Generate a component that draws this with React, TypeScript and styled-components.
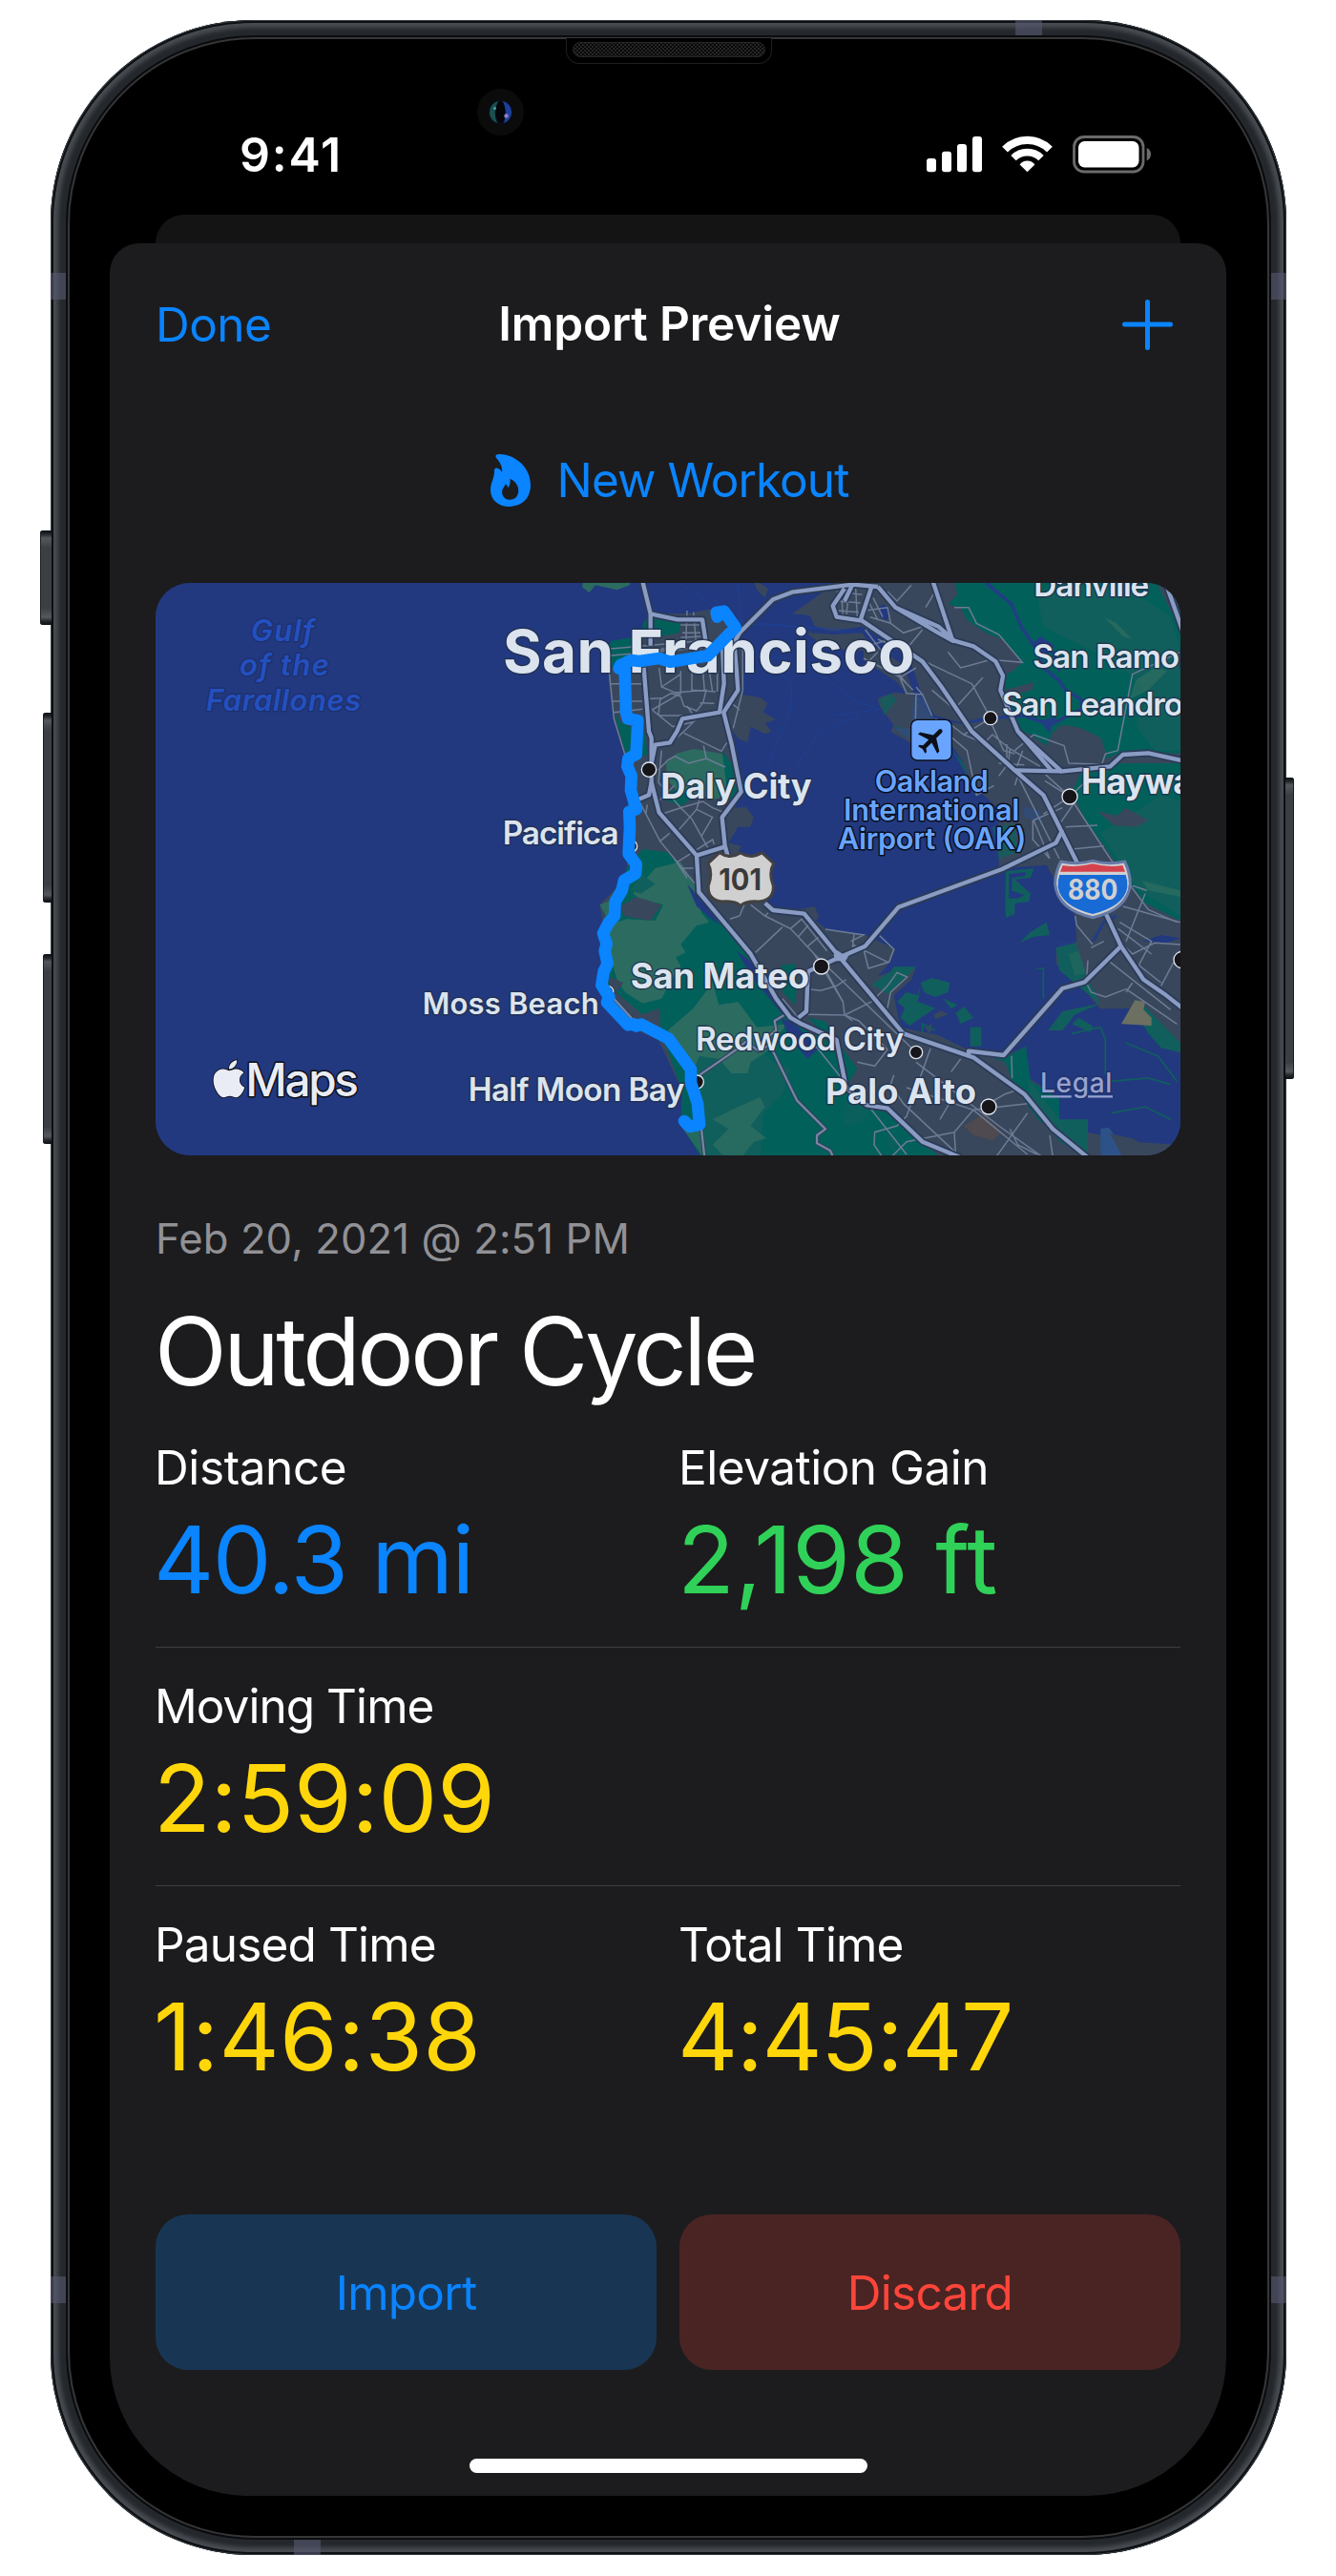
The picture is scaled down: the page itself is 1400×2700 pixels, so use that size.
import React from "react";
import styled, { createGlobalStyle } from "styled-components";
import { FaApple } from "react-icons/fa";

const GlobalStyle = createGlobalStyle`
  body { margin: 0; background: #fff; font-family: "Inter", "Liberation Sans", sans-serif; }
  *, *::before, *::after { box-sizing: border-box; }
`;

/* ---------- device ---------- */

const Page = styled.div`
  width: 1400px;
  height: 2700px;
  padding: 21px 52px 0 53px;
  background: #fff;
  overflow: hidden;
`;

const Device = styled.div`
  position: relative;
  width: 1295px;
  height: 2657px;
  padding: 18px;
  border-radius: 212px;
  background: #24282d;
  box-shadow: inset 0 0 0 1px #3a3f44, inset 0 0 0 3px #0c1014, inset 0 0 4px 8px #484c51;
`;

const Bezel = styled.div`
  position: relative;
  z-index: 1;
  display: flex;
  flex-direction: column;
  height: 100%;
  padding: 2px 43px 42px 42px;
  border-radius: 196px;
  background: #000;
  border: 2px solid #363636;
  box-shadow: 0 0 0 2px #0a0c0f;
`;

const SideKey = styled.i<{ $top: number; $height: number; $side: "left" | "right"; $depth: number }>`
  position: absolute;
  top: ${(p) => p.$top}px;
  ${(p) => p.$side}: ${(p) => -p.$depth}px;
  width: ${(p) => p.$depth + 1}px;
  height: ${(p) => p.$height}px;
  border-radius: ${(p) => (p.$side === "left" ? "3px 0 0 3px" : "0 3px 3px 0")};
  background: linear-gradient(#0b0f12, #24282c 4px, #55595d 8px, #3b3f43 18px, #3b3f43 calc(100% - 18px), #55595d calc(100% - 8px), #24282c calc(100% - 4px), #0b0f12);
  box-shadow: inset ${(p) => (p.$side === "left" ? "1px" : "-1px")} 0 0 #1b1f22;
`;

const Antenna = styled.i<{ $x: number; $y: number; $w: number; $h: number }>`
  position: absolute;
  left: ${(p) => p.$x}px;
  top: ${(p) => p.$y}px;
  width: ${(p) => p.$w}px;
  height: ${(p) => p.$h}px;
  background: rgba(86, 88, 112, 0.6);
`;

const Earpiece = styled.div`
  position: absolute;
  top: -1px;
  left: 50%;
  width: 216px;
  height: 27px;
  margin-left: -108px;
  padding: 4px 6px 6px;
  background: #000;
  border: 1.5px solid #1f1f1f;
  border-top: 0;
  border-radius: 0 0 14px 14px;
`;

const Grille = styled.div`
  height: 16px;
  border-radius: 8px;
  border: 1.5px solid #262626;
  background-color: #080808;
  background-image: radial-gradient(#2c2c2c 24%, transparent 30%), radial-gradient(#2c2c2c 24%, transparent 30%);
  background-size: 4px 4px;
  background-position: 0 0, 2px 2px;
`;

const Camera = styled.div`
  position: absolute;
  left: 427px;
  top: 52px;
  width: 49px;
  height: 49px;
  display: grid;
  place-items: center;
  border-radius: 50%;
  background: #0b0b0b;
`;

const StatusBar = styled.header`
  display: flex;
  justify-content: space-between;
  align-items: center;
  height: 182px;
  padding: 56px 78px 0 136px;
  color: #fff;
`;

const Clock = styled.time`
  font-size: 50px;
  line-height: 60px;
  font-weight: 600;
  letter-spacing: 1.8px;
`;

const BackSheet = styled.div`
  flex: none;
  height: 60px;
  margin: 0 48px -30px;
  border-radius: 30px 30px 0 0;
  background: #141414;
`;

const Sheet = styled.main`
  position: relative;
  display: flex;
  flex-direction: column;
  flex: 1;
  padding: 0 48px 24px;
  border-radius: 31px 31px 146px 146px;
  background: #1c1c1e;
`;

/* ---------- sheet content ---------- */

const NavBar = styled.nav`
  display: grid;
  grid-template-columns: 1fr auto 1fr;
  align-items: center;
  height: 170px;
  font-size: 49.5px;
  line-height: 60px;
  color: #0a84ff;
`;

const DoneLink = styled.span`
  letter-spacing: -0.55px;
`;

const NavTitle = styled.h1`
  margin: 0 0 2px 3px;
  font-size: inherit;
  font-weight: 600;
  letter-spacing: -0.17px;
  color: #fff;
`;

const AddButton = styled.span`
  display: flex;
  justify-content: flex-end;
  padding-right: 8px;
`;

const NewWorkout = styled.div`
  display: flex;
  align-items: center;
  justify-content: center;
  gap: 28px;
  height: 156px;
  margin: 0 0 30px 3px;
  font-size: 49.5px;
  letter-spacing: -0.95px;
  color: #0a84ff;
`;

const MapCard = styled.div`
  height: 600px;
  border-radius: 36px;
  overflow: hidden;
  background: #22397f;

  > svg {
    display: block;
  }
`;

const Timestamp = styled.p`
  margin: 63px 0 0;
  font-size: 43.6px;
  line-height: 49px;
  letter-spacing: 0.13px;
  color: #919196;
`;

const WorkoutTitle = styled.h2`
  margin: 33px 0 0 -1px;
  font-size: 99px;
  line-height: 121px;
  font-weight: 400;
  letter-spacing: -3.5px;
  color: #fff;
`;

const StatRow = styled.section`
  display: grid;
  grid-template-columns: 1fr 1fr;
  column-gap: 24px;
  height: 250px;
  padding-top: 31px;

  &:not(:last-of-type) {
    border-bottom: 1px solid #3d3d40;
  }
`;

const Stat = styled.div`
  display: flex;
  flex-direction: column;
  gap: 17px;
`;

const StatLabel = styled.span<{ $tracking: number }>`
  font-size: 49.5px;
  line-height: 60px;
  letter-spacing: ${(p) => p.$tracking}px;
  margin-left: -1px;
  color: #fff;
`;

const StatValue = styled.span<{ $tracking: number; $color: string }>`
  font-size: 98px;
  line-height: 100px;
  letter-spacing: ${(p) => p.$tracking}px;
  margin-left: -2px;
  color: ${(p) => p.$color};
`;

const Actions = styled.div`
  display: grid;
  grid-template-columns: 1fr 1fr;
  gap: 24px;
  margin-top: auto;
`;

const ActionButton = styled.button<{ $fg: string; $bg: string }>`
  height: 163px;
  padding: 0;
  border: 0;
  border-radius: 34px;
  font: 400 49.5px "Inter", sans-serif;
  letter-spacing: -0.75px;
  color: ${(p) => p.$fg};
  background: ${(p) => p.$bg};
`;

const HomeIndicator = styled.div`
  width: 417px;
  height: 15px;
  margin: 93px auto 0;
  border-radius: 8px;
  background: #fff;
`;

/* ---------- icons ---------- */

const StatusIcons = () => (
  <svg width="236" height="40" viewBox="971 142 236 40">
    <g fill="#fff">
      <rect x="971" y="166" width="10" height="14.3" rx="3" />
      <rect x="987" y="158.7" width="10" height="21.6" rx="3" />
      <rect x="1003" y="151" width="10" height="29.3" rx="3" />
      <rect x="1019" y="143" width="10" height="37.3" rx="3" />
      <path d="M1076.5 180.3L1068.6 172.4Q1071.5 168.6 1076.5 168.6Q1081.5 168.6 1084.4 172.4Z" />
    </g>
    <g fill="none" stroke="#fff" strokeWidth="8.2">
      <path d="M1053 156.6A33.2 33.2 0 0 1 1100 156.6" />
      <path d="M1062 165.6A20.5 20.5 0 0 1 1091 165.6" strokeWidth="7.6" />
    </g>
    <rect x="1125.5" y="143.5" width="72.5" height="36.5" rx="10.5" fill="none" stroke="#6b6b6b" strokeWidth="2.8" />
    <rect x="1130" y="148" width="63.5" height="27.5" rx="6.5" fill="#fff" />
    <path d="M1201.7 155V168.5Q1206 166.5 1206 161.8T1201.7 155Z" fill="#6b6b6b" />
  </svg>
);

const CameraLens = () => (
  <svg width="27" height="27" viewBox="0 0 27 27">
    <circle cx="13.5" cy="13.5" r="12.5" fill="#0b0f1c" />
    <path d="M11 2A12 12 0 0 0 10 25Q5 14 11 2Z" fill="#1a4f50" />
    <path d="M16 2A12 12 0 0 1 17 25Q21 14 16 2Z" fill="#1d3f9c" />
    <ellipse cx="13.500" cy="13.500" rx="5" ry="11" fill="#040509" />
    <circle cx="7.500" cy="9.500" r="1.500" fill="#4fa0a8" />
    <circle cx="19.500" cy="17.500" r="2.200" fill="#8f7fc4" />
  </svg>
);

const PlusIcon = () => (
  <svg width="53" height="53" viewBox="0 0 53 53" stroke="#0a84ff" strokeWidth="5" strokeLinecap="round">
    <path d="M2.500 26H50.500M26.500 2.500V50.500" />
  </svg>
);

const FlameIcon = () => (
  <svg width="42" height="55" viewBox="69 101 125 163">
    <path
      fill="#0a84ff"
      fillRule="evenodd"
      d="M86 111C83 105 87 101 98 101C150 103 194 145 194 197C194 238 168 264 128 264C92 264 69 242 69 212C69 190 81 178 81 151C81 143 88 142 93 145C98 147 102 151 105 157C107 138 97 124 86 111ZM130 177C145 183 156 197 156 214C156 232 146 243 130 243C115 243 105 233 105 219C105 208 112 204 116 194C120 197 123 201 123 206C130 198 131 188 130 177Z"
    />
  </svg>
);

/* ---------- map ---------- */

const LAND = "#39475c";
const FOREST = "#02605b";
const MEADOW = "#2c6c60";
const PARK = "#115f5d";
const WATER = "#22397f";

const Label = styled.text<{ $size: number; $weight?: number; $fill?: string; $halo?: string }>`
  font-family: "Inter", sans-serif;
  font-size: ${(p) => p.$size}px;
  font-weight: ${(p) => p.$weight ?? 600};
  fill: ${(p) => p.$fill ?? "#dbe4ee"};
  stroke: ${(p) => p.$halo ?? "rgba(34, 47, 78, 0.8)"};
  stroke-width: 9px;
  stroke-linejoin: round;
  paint-order: stroke;
`;

type MapLabel = {
  t: string; x: number; y: number; w?: number; s: number;
  weight?: number; fill?: string; halo?: string; italic?: boolean; ls?: number;
};

const BLUE = { fill: "#68a4ff", halo: "#0b0f1c" };
const GULF = { fill: "#2450bf", halo: "#1e316f", italic: true };

const labels: MapLabel[] = [
  { t: "Daly City", x: 577, y: 710, w: 475, s: 109, weight: 700 },
  { t: "Pacifica", x: 80, y: 855, w: 366, s: 100 },
  { t: "Danville", x: 1750, y: 75, w: 363, s: 100 },
  { t: "San Ramon", x: 1747, y: 300, s: 100, ls: -3 },
  { t: "San Leandro", x: 1649, y: 450, s: 100, ls: -3.4 },
  { t: "Hayward", x: 1899, y: 697, s: 109, weight: 700, ls: -3 },
  { t: "San Mateo", x: 482, y: 1308, w: 562, s: 109, weight: 700 },
  { t: "Redwood City", x: 687, y: 1503, w: 654, s: 100 },
  { t: "Palo Alto", x: 1095, y: 1672, w: 474, s: 109, weight: 700 },
  { t: "Half Moon Bay", x: -28, y: 1662, w: 680, s: 100 },
  { t: "Moss Beach", x: -172, y: 1388, w: 555, s: 93 },
  { t: "Gulf", x: -712, y: 215, w: 200, s: 93, ...GULF },
  { t: "of the", x: -747, y: 324, w: 282, s: 93, ...GULF },
  { t: "Farallones", x: -852, y: 436, w: 487, s: 93, ...GULF },
  { t: "Oakland", x: 1250, y: 690, w: 358, s: 92, ...BLUE },
  { t: "International", x: 1152, y: 780, w: 553, s: 92, ...BLUE },
  { t: "Airport (OAK)", x: 1134, y: 870, w: 592, s: 92, ...BLUE },
];

const highways = [
  "M518 20L545 130L545 230M524 300L540 500L548 520V660L572 755L690 890L697 1005L860 1200L940 1340L985 1400L1020 1420L1130 1470L1150 1570L1160 1620L1225 1675L1290 1685L1400 1790L1520 1840",
  "M545 130L630 148H708L722 240M770 200L776 350L762 440L645 460L628 500L606 535L560 542L548 600M548 660L540 700L508 713",
  "M808 220L825 190L930 85L990 62L1180 38L1260 45M808 220L815 300L820 370L775 440L800 540L830 690L770 770L780 870M690 890L780 862L790 900",
  "M905 1040L930 1062L1028 1073L1140 1210L1340 1450L1560 1525L1720 1640L1810 1750L1920 1840",
  "M1040 1255L1140 1210L1220 1175L1325 1052L1650 933L1820 850L1840 810M1040 1255L1035 1380L1010 1400",
  "M1545 1525V1505L1655 1518L1840 1308L1910 1288L2024 1175",
  "M1155 50L1118 105L1130 140L1210 152L1400 280L1460 360L1555 500L1690 622L1780 700L1840 820L1890 920L1980 1080L2024 1175L2095 1280L2160 1325L2220 1372",
  "M1180 38L1155 90M1240 45L1205 150M1260 45L1315 110L1450 170L1500 215L1560 232L1630 280L1653 325L1645 370L1700 500L1840 628M1315 110L1450 190L1495 215L1430 20M1700 500L1805 622",
  "M1690 622L1840 625L1990 610L2030 573L2110 568L2220 592M2160 20L2220 190",
];

const streets = [
  "M415 310L430 460L470 590M420 240L700 215M415 262L780 230M420 350H520M425 405H520M430 440L520 430M500 250L640 235M520 398L580 395",
  "M660 120L655 240M680 125L690 240M640 165H710M645 190H705M640 205L720 200M572 300L580 360L640 385M550 432L640 380L640 310M675 300V370L750 375M710 310L715 375M730 310L740 375M755 310V375M580 360L640 320",
  "M550 432L615 485M570 450H680L660 420M570 450L575 400L610 380L640 390L650 420L690 435L710 410L720 370L620 378M615 485L680 470L650 500L610 535M650 505L768 562L785 535M835 240V370L805 490M700 410L745 412M805 415L825 432",
  "M570 620L600 590L622 578L665 600L720 585L780 612M712 545L720 585M580 560L570 660L640 740L710 720L740 740L790 760L825 700M570 720L620 670M580 760L640 740L675 775L725 865M625 820L690 745L740 770L705 830M690 745L700 710",
  "M510 720L575 845L690 985M575 845L605 820M630 910L740 840L745 855M535 730L530 760M620 900L660 960M640 930H690",
  "M795 1090L825 1080L840 1045M860 1045L905 1080L985 1120L1060 1200L1150 1350L1155 1390M905 1080L915 1070M985 1120L1020 1090L1100 1190M1010 1145L1045 1105M1040 1175L1075 1145M875 1195L960 1115M1040 1390L1155 1392L1180 1410M1060 1200L1380 1509M1040 1310L1080 1315L1130 1300L1160 1280",
  "M1095 1122L1215 1140L1175 1160M1185 1138L1180 1180M1215 1185L1230 1245L1295 1225L1310 1185L1265 1142M1180 1170L1290 1225M1155 1392L1240 1350L1290 1300L1320 1258L1352 1272L1300 1320L1290 1370M1150 1350L1090 1240M1155 1392L1200 1410L1290 1500M1195 1540L1250 1552L1290 1500M960 1340L1060 1460M1065 1490L1170 1620L1240 1690L1350 1830",
  "M1310 1580L1300 1610L1340 1670L1500 1820M1425 1497L1350 1710L1320 1740L1250 1760L1248 1800L1275 1840M1350 1620L1560 1690L1730 1830M1380 1540L1640 1740L1780 1840M1500 1760L1560 1690L1730 1670M1500 1760L1350 1790L1300 1840M1500 1760L1505 1840M1490 1570L1520 1530M1455 1720L1490 1660M1630 1840L1730 1700M1675 1750L1700 1800L1760 1830M1800 1770L1810 1840M1680 1520L1682 1590M1590 1680L1660 1640L1690 1630",
  "M1130 60L1210 70M1125 90L1205 95M1135 120L1200 125M1170 50L1160 140M1190 50L1195 140M1145 55L1150 140M1230 90L1260 150M1245 80L1275 140M1220 120L1290 110M1235 140L1300 160M1290 60L1320 90L1365 40M1290 110L1300 160L1340 190L1400 170",
  "M1220 180L1350 350M1230 230L1300 210M1260 250L1210 300M1215 270L1330 330L1380 300M1300 300L1370 370M1320 310L1350 380L1400 384L1430 450M1260 210L1555 350L1614 458M1430 370L1500 430L1590 330M1350 240L1400 180M1410 110L1440 60M1480 250L1520 300L1630 270M1500 110H1545L1570 160L1640 195L1714 283L1630 275",
  "M1400 384L1380 360M1380 384L1378 460M1440 460L1490 480L1530 510L1614 458M1470 500L1540 560L1570 700L1625 670M1530 510L1575 530M1610 460L1655 560L1690 570M1555 520L1600 530L1620 510L1675 555L1770 610M1640 600L1720 605M1675 555L1670 600L1640 640M1690 560L1750 510L1845 545L1860 600L1960 603M1665 540V600M1715 560L1690 630",
  "M1700 640L1830 900M1700 640L1690 670M1750 780L1800 900M1780 760L1863 705L1770 620M1747 780V840L1800 900M1747 780L1840 740M1785 655L1863 705M1863 705L1920 650L1910 640M1863 705L1990 900L2110 1060L2200 1100M1850 800L1950 795M1870 870L1970 860M1825 800L1880 720",
  "M1964 603L1975 570L2014 560L2060 320L2211 250M1880 1080L1885 1110L1935 1170M1930 1180L1970 1160M1920 1220L1915 1290L1930 1320L1975 1335L2040 1310M2030 1050L2211 1100M1990 1225L2180 1375M2030 1170L2060 1200L2130 1165L2211 1170M2020 1100L2120 1160L2080 1235M2100 1010L2040 1160M2060 985L2105 1000M2015 1120L2120 1200M2040 1310L2200 1420M2190 1225L2150 1300M2080 1235L2150 1290M2120 1160L2070 1130M2060 1290L2040 1320",
];

const coastRoad =
  "M430 1340L520 1440M700 1580L815 1500L845 1475L885 1505L920 1485L1005 1660L1095 1750L1068 1770V1795L1110 1818L1120 1840M705 1750L715 1840M890 1480L940 1440L935 1410L965 1392";

const ROUTE =
  "M755 140L752 126L776 122L812 173L725 262L607 281L573 270L510 279L484 276L450 292L446 302L464 300L468 440L474 460L505 466L500 572L475 585L472 610L485 640L483 685L500 745L478 752L480 800L476 885L500 918L498 947L462 968L455 1000L434 1035L432 1080L414 1100L396 1135L407 1168L401 1190L410 1230L398 1255L391 1298L415 1335L408 1352L475 1423L492 1420L500 1426L516 1421L602 1466L672 1562V1605L693 1670L699 1736L668 1742L651 1725";

const dots: [number, number, number][] = [
  [540, 620, 23], [485, 861, 18], [1082, 1239, 24], [411, 1318, 17], [691, 1602, 21],
  [1614, 458, 21], [1863, 705, 24], [1380, 1509, 20], [1608, 1680, 24], [2216, 1218, 26],
];

const MapView = () => (
  <svg width="1074" height="600" viewBox="-1011 33 3222 1800" preserveAspectRatio="none">
    <rect x="-1011" y="33" width="3222" height="1800" fill={WATER} />
    {/* Marin headlands */}
    <path fill={MEADOW} d="M330 45L352 64L372 40L440 55L480 40V20H335Z" />
    <path fill={LAND} d="M865 20L915 50L905 80L880 55Z" />
    {/* peninsula */}
    <path
      fill={LAND}
      d="M522 160L545 128L660 130L740 115L800 160L835 240V385L862 388L895 395L912 412L900 440L938 462L905 475L925 500L905 508L860 485L850 535L820 522L805 500L830 690L812 740L845 738L870 770L858 800L820 800L790 850L830 860L815 900L905 1035L935 1062L1020 1058L1060 1050L1075 1080L1065 1095L1100 1125L1215 1138L1315 1185L1298 1225L1260 1270L1330 1245L1378 1245L1365 1280L1310 1330L1330 1430L1450 1455L1540 1500L1660 1520L1725 1490L1735 1590L1825 1650L1825 1722H1920V1760L2060 1790L2211 1800V1840H705L640 1735L645 1630L570 1470L480 1430L400 1340L380 1290L410 1180L385 1045L470 960L475 600L430 460L413 345L418 240L520 205Z"
    />
    <path fill={FOREST} d="M420 215L485 205L480 270L425 300L412 240ZM520 165L545 130L600 145L640 160L635 190L560 205L545 175L520 200ZM430 440L450 470L530 510L535 575L470 580Z" />
    <path fill={MEADOW} d="M595 600L625 570L680 555L770 570L785 620L800 660L790 700L740 715L700 700L640 700L595 650Z" />
    <path fill={FOREST} d="M770 560L800 600L815 670L840 700L790 715L780 640ZM590 680L690 700L640 735L590 715Z" />
    {/* coastal range */}
    <path
      fill={FOREST}
      d="M470 930L520 870L600 880L660 960L730 1030L860 1200L885 1260L985 1400L1110 1480L1060 1420L1130 1470L1195 1560L1160 1620L1180 1660L1290 1700L1400 1795L1460 1840H705L640 1735L645 1630L590 1480L570 1400L520 1390L400 1290L410 1100Z"
    />
    <path
      fill={MEADOW}
      d="M385 1045L425 1030L440 1100L470 1090L560 1095L585 1045L510 1025L490 1010L560 930L640 910L680 975L705 1070L730 1100L690 1110L640 1170L655 1195L625 1210L640 1240L600 1300L580 1340L520 1355L465 1320L440 1280L415 1200L395 1150L405 1080Z"
    />
    <path fill={PARK} d="M480 1000L520 950L560 980L515 1010ZM620 1410L690 1450L820 1440L930 1540L985 1560L960 1640L900 1700L890 1840H715L690 1650L640 1500Z" />
    <path fill={MEADOW} d="M600 1440L680 1370L740 1290L760 1360L820 1350L880 1430L975 1420L935 1470L920 1500L860 1540L850 1575L800 1575L760 1530L700 1520L680 1560Z" />
    <path fill={MEADOW} d="M740 1720L800 1690L890 1650L905 1680L860 1740L910 1780L870 1790L830 1840H780L740 1800L790 1750ZM640 1740L700 1740L712 1840Z" opacity=".85" />
    <path fill={LAND} d="M450 1050L500 1020L580 1045L545 1095L460 1080ZM412 1270L460 1290L440 1320L415 1300ZM520 1390L575 1370V1430L540 1430Z" />
    <path fill={WATER} d="M660 980L740 1065L760 1110L690 1050ZM815 1190L870 1230L985 1380L960 1390L870 1280ZM955 1400L1000 1420L1070 1500L1040 1530L985 1470Z" />
    <path fill={FOREST} d="M955 1235L1000 1230L1005 1300L1000 1360L960 1320ZM1040 1400L1090 1410L1130 1450L1100 1460ZM1560 1505L1670 1520L1725 1490L1740 1600L1830 1655V1720L1770 1730L1690 1620L1660 1540Z" />
    <path fill={PARK} d="M1310 1240L1380 1240L1350 1270L1290 1325L1240 1295L1300 1255ZM1730 1590L1830 1720H1920V1840L1830 1790L1740 1660Z" />
    <path fill="#4e4a4f" d="M1530 1740L1590 1705L1650 1760L1620 1785L1560 1770Z" />
    <path fill={PARK} d="M1160 1640L1230 1690L1210 1730L1150 1740ZM1290 1770L1330 1780L1310 1820L1290 1800Z" opacity=".6" />
    {/* marsh islands */}
    <path
      fill={PARK}
      d="M1395 1290L1430 1275L1486 1290L1480 1320L1440 1335L1405 1320ZM1320 1350L1350 1320L1385 1330L1395 1290L1385 1350L1440 1370L1395 1400L1360 1425L1330 1400L1345 1370ZM1505 1385L1530 1365L1560 1400L1520 1420ZM1550 1430L1585 1430V1490H1550ZM1465 1340L1510 1360L1490 1372Z"
    />
    <path fill={LAND} d="M1435 1390L1460 1378L1480 1390L1440 1405ZM1405 1430L1430 1420L1425 1450Z" />
    {/* east bay */}
    <path
      fill={LAND}
      d="M1110 45L1040 95L990 130L1045 135L1060 165L1040 195L1100 240L1215 245L1215 275L1320 345L1350 380L1310 378L1260 395L1265 420L1310 480L1300 500L1370 540L1490 540L1530 600L1550 660L1640 745V930L1790 920L1880 1080L1885 1170L1820 1180V1230L1900 1300L1960 1375L2060 1370L2211 1520V20H1130Z"
    />
    <path fill={WATER} d="M1050 165L1115 185L1210 170L1330 240L1370 300L1400 390L1440 450L1550 480L1440 465L1380 400L1340 290L1230 220L1210 190L1120 195L1050 190Z" />
    <path fill={WATER} d="M1260 110L1280 100L1298 118L1290 150L1268 142Z" />
    <path fill={PARK} d="M1265 400L1300 380L1320 400L1280 450ZM1310 480L1360 500L1370 530ZM1495 560L1530 600L1550 660L1540 640ZM1620 800L1690 790L1700 880L1640 900Z" opacity=".8" />
    <path fill="#2f4c7c" d="M1375 390L1400 390L1440 462H1364ZM1310 490L1364 490V530ZM1715 735L1770 750L1775 785L1720 770Z" opacity=".8" />
    <path fill={FOREST} d="M1500 20L1510 70L1480 100L1520 110L1540 150L1600 190L1650 210L1714 283L1690 305L1650 330L1660 370L1750 345L1745 370L1690 385L1670 440L1690 490L1740 510L1790 545L1810 500L1850 480L1900 490L1960 520L1980 575L1960 590L2020 570L2130 565L2211 570V20Z" />
    <path fill={FOREST} d="M1900 625L2030 600L2211 600V1095L2100 1040L2000 900L1910 775L1870 690Z" />
    <path fill={PARK} d="M1760 70L1880 40L2060 60L2180 140L2211 240V560L2130 560L2070 480L2110 380L2010 280L1900 230L1780 170ZM2060 760L2150 700L2211 720V1080L2080 1000L1960 820Z" />
    <path fill={MEADOW} d="M1970 140L2010 160L2060 210L2030 200ZM2070 340L2130 300L2170 310L2110 370L2050 400ZM2090 970L2211 1000V1020L2110 1000Z" opacity=".75" />
    <path fill={LAND} d="M2130 20L2150 60L2211 180V20ZM1950 750L2010 765L2040 740L2110 780L2070 800L2000 795ZM1830 480L1900 500L1965 560L1960 600L1850 590L1800 530Z" />
    {/* eastern creeks */}
    <path fill="none" stroke="#233c86" strokeWidth="10" d="M1600 33L1680 100L1710 170L1750 230L1810 250L1830 310M1760 240L1780 300L1830 340L1850 370L1900 400V430L1800 480L1720 450L1600 460L1550 470M2010 1080L1970 1100L1930 1170H1830" />
    <path fill="#233c86" d="M1745 225L1770 200L1815 230L1790 260L1760 262ZM1770 465L1820 455L1798 505Z" />
    {/* southern marshes */}
    <path
      fill={PARK}
      d="M1662 940L1750 930L1740 960L1690 965L1740 1010L1735 1035L1660 1045ZM1660 1040H1690V1075L1662 1085ZM1705 1165L1740 1130L1790 1100L1800 1140L1750 1145ZM1795 1440L1840 1380L1960 1355L1880 1390L1840 1440ZM1890 1400L1960 1440L1950 1455L1870 1420ZM1820 1180L1900 1160L1940 1170L1930 1290L1960 1360L1830 1250ZM1990 1585L2090 1575L2070 1595L2000 1600ZM2050 1380L2211 1480V1500L2160 1490L2110 1440Z"
    />
    <path fill={WATER} d="M1672 948L1725 942L1722 955L1682 960L1680 1000L1720 1015L1700 1025L1672 1025Z" />
    <path fill={MEADOW} opacity=".5" d="M1860 1200L1920 1180L1910 1260L1880 1270Z" />
    <path fill={LAND} d="M1880 1160L1935 1160L2020 1175L2090 1290L2120 1350L1990 1370L1950 1330L1925 1290Z" />
    <path fill={WATER} d="M2090 1160L2150 1140L2211 1150L2170 1165ZM1960 1372L2000 1372L2060 1372L2100 1430L2130 1490L2211 1510V1780L2110 1790L1920 1760V1460Z" />
    <path fill={PARK} d="M2060 1370L2100 1365L2211 1480V1510L2150 1495L2110 1450Z" />
    <path fill="none" stroke={PARK} strokeWidth="5" d="M1870 1450L1960 1430L1975 1470L1975 1580M2040 1480L2140 1520L2200 1600M1990 1600L2110 1590L2180 1610M1760 1245H1780V1340M1995 1700L2100 1680L2180 1720M1400 1445V1420L1440 1440" />
    <path fill="#6c7060" d="M2068 1345L2100 1350L2095 1375L2120 1400V1425L2030 1420H2025Z" />
    <path fill="#2d5288" d="M1960 1750L1985 1745L2020 1790L2030 1840H1960Z" />
    <path fill={LAND} d="M1990 1765L2060 1780L2150 1830V1840H2030Z" />
    {/* ferry lines */}
    <path fill="none" stroke="#1d45a0" strokeWidth="3" opacity=".6" d="M640 35L810 150L1200 190M700 35L815 160L1180 180M820 35L830 160M815 200L990 350L985 430L900 640M850 240L1050 300L1200 410L1265 430M1200 450L1080 500L1000 610M1265 430L1120 450" />

    <g fill="none" stroke="#6d7b95" strokeWidth="4.500">
      {streets.map((d) => <path key={d} d={d} />)}
    </g>
    <g fill="none" strokeLinejoin="round">
      <path d={coastRoad} stroke="#2f4058" strokeWidth="13" />
      <path d={coastRoad} stroke="#7585a3" strokeWidth="7" />
      {highways.map((d) => <path key={d} d={d} stroke="#2b3b57" strokeWidth="24" />)}
      {highways.map((d) => <path key={d + "-fill"} d={d} stroke="#8a9cc3" strokeWidth="13" />)}
    </g>
    <path d="M1120 1203L1132 1188L1150 1200L1175 1193L1158 1222L1128 1222Z" fill="#8a9cc3" />

    {dots.map(([x, y, r]) => (
      <circle key={`${x}-${y}`} cx={x} cy={y} r={r} fill="#15151a" stroke="#e2e6ee" strokeWidth="4" />
    ))}

    <Label $size={186} $weight={700} x={81} y={314} textLength={1294}>San Francisco</Label>
    <path d={ROUTE} fill="none" stroke="#0a84ff" strokeWidth="38" strokeLinejoin="round" strokeLinecap="round" />

    {labels.map((l) => (
      <Label
        key={l.t}
        $size={l.s}
        $weight={l.weight}
        $fill={l.fill}
        $halo={l.halo}
        x={l.x}
        y={l.y}
        textLength={l.w}
        letterSpacing={l.ls}
        fontStyle={l.italic ? "italic" : undefined}
      >
        {l.t}
      </Label>
    ))}

    {/* airport */}
    <rect x="1364" y="463" width="128" height="128" rx="20" fill="#69a4ff" stroke="#0c0f18" strokeWidth="4" />
    <g transform="translate(1429 526) rotate(45) scale(4.5) translate(-11.5 -12)">
      <path fill="#0c0f18" d="M21 16v-2l-8-5V3.500c0-.83-.67-1.500-1.500-1.500S10 2.670 10 3.500V9l-8 5v2l8-2.500V19l-2 1.500V22l3.500-1 3.500 1v-1.500L13 19v-5.500l8 2.500z" />
    </g>

    {/* US 101 */}
    <path
      fill="#d0d0d0"
      stroke="#434141"
      strokeWidth="9"
      strokeLinejoin="round"
      d="M762 881Q795 903 828 882Q861 903 895 881L932 915Q915 945 931 985Q934 1030 885 1035Q845 1032 828 1048Q811 1032 771 1035Q723 1030 727 985Q742 945 726 915Z"
    />
    <Label $size={92} $weight={700} $fill="#3a3a3a" $halo="none" x={760} y={998} textLength={134} lengthAdjust="spacingAndGlyphs">101</Label>

    {/* I-880 */}
    <path
      fill="#d0d0d0"
      stroke="#667aa6"
      strokeWidth="9"
      strokeLinejoin="round"
      d="M1835 909Q1885 920 1935 907Q1985 920 2036 909Q2053 945 2053 980Q2046 1060 1935 1085Q1824 1060 1817 980Q1817 945 1835 909Z"
    />
    <path fill="#d4424e" d="M1841 921Q1885 929 1935 916Q1985 929 2029 921L2037 941H1833Z" />
    <path fill="#186bd5" d="M1831 951H2039Q2046 970 2044 990Q2034 1050 1935 1074Q1836 1050 1826 990Q1824 970 1831 951Z" />
    <Label $size={88} $weight={700} $fill="#d0d0d0" $halo="none" x={1857} y={1028} textLength={157} lengthAdjust="spacingAndGlyphs">880</Label>

    {/* Apple Maps logo */}
    <FaApple size={134} x={-847} y={1525} color="#e9ecf4" stroke="#0b0e16" strokeWidth={20} style={{ paintOrder: "stroke" }} />
    <Label $size={143} $weight={500} $fill="#e9ecf4" $halo="#0b0e16" x={-728} y={1648} textLength={356}>Maps</Label>

    <Label $size={84} $weight={500} $fill="#97a3cf" $halo="rgba(30,45,95,.6)" x={1770} y={1635} textLength={226}>Legal</Label>
    <path d="M1773 1648H1868M1920 1648H1998" stroke="#97a3cf" strokeWidth="7" />
  </svg>
);

/* ---------- data ---------- */

type StatItem = { label: string; labelTracking: number; value: string; tracking: number; color: string };

const YELLOW = "#ffd60a";

const statRows: StatItem[][] = [
  [
    { label: "Distance", labelTracking: -0.4, value: "40.3 mi", tracking: -1.6, color: "#0a84ff" },
    { label: "Elevation Gain", labelTracking: -0.5, value: "2,198 ft", tracking: 0.3, color: "#30d158" },
  ],
  [{ label: "Moving Time", labelTracking: -0.95, value: "2:59:09", tracking: -0.2, color: YELLOW }],
  [
    { label: "Paused Time", labelTracking: -0.85, value: "1:46:38", tracking: 0.2, color: YELLOW },
    { label: "Total Time", labelTracking: -0.85, value: "4:45:47", tracking: -1.5, color: YELLOW },
  ],
];

export default function App() {
  return (
    <Page>
      <GlobalStyle />
      <Device>
        <SideKey $side="left" $depth={11} $top={535} $height={99} />
        <SideKey $side="left" $depth={8} $top={726} $height={199} />
        <SideKey $side="left" $depth={8} $top={979} $height={199} />
        <SideKey $side="right" $depth={8} $top={794} $height={316} />
        <Antenna $x={0} $y={265} $w={17} $h={28} />
        <Antenna $x={1278} $y={265} $w={17} $h={28} />
        <Antenna $x={0} $y={2365} $w={17} $h={28} />
        <Antenna $x={1278} $y={2365} $w={17} $h={28} />
        <Antenna $x={1011} $y={0} $w={28} $h={17} />
        <Antenna $x={255} $y={2640} $w={28} $h={17} />
        <Bezel>
          <Earpiece>
            <Grille />
          </Earpiece>
          <Camera>
            <CameraLens />
          </Camera>
          <StatusBar>
            <Clock>9:41</Clock>
            <StatusIcons />
          </StatusBar>
          <BackSheet />
          <Sheet>
            <NavBar>
              <DoneLink>Done</DoneLink>
              <NavTitle>Import Preview</NavTitle>
              <AddButton>
                <PlusIcon />
              </AddButton>
            </NavBar>
            <NewWorkout>
              <FlameIcon />
              <span>New Workout</span>
            </NewWorkout>
            <MapCard>
              <MapView />
            </MapCard>
            <Timestamp>Feb 20, 2021 @ 2:51 PM</Timestamp>
            <WorkoutTitle>Outdoor Cycle</WorkoutTitle>
            {statRows.map((row, i) => (
              <StatRow key={i}>
                {row.map((s) => (
                  <Stat key={s.label}>
                    <StatLabel $tracking={s.labelTracking}>{s.label}</StatLabel>
                    <StatValue $tracking={s.tracking} $color={s.color}>{s.value}</StatValue>
                  </Stat>
                ))}
              </StatRow>
            ))}
            <Actions>
              <ActionButton $fg="#0a84ff" $bg="#183654">Import</ActionButton>
              <ActionButton $fg="#ff453a" $bg="#4a2423">Discard</ActionButton>
            </Actions>
            <HomeIndicator />
          </Sheet>
        </Bezel>
      </Device>
    </Page>
  );
}
